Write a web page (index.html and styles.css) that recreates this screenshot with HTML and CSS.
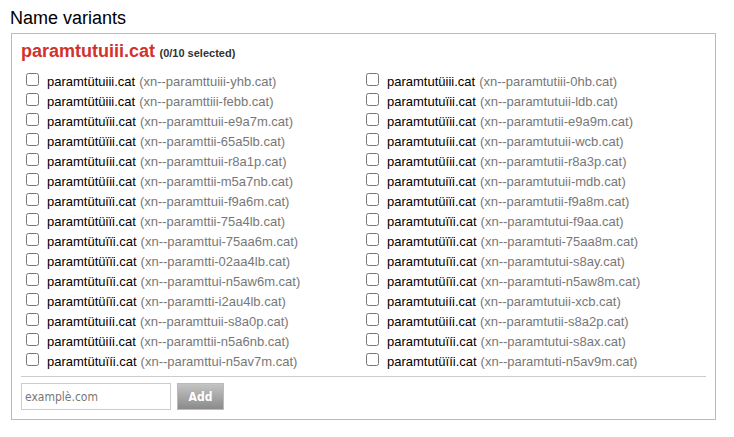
FILE: index.html
```html
<!DOCTYPE html>
<html>
<head>
<meta charset="utf-8">
<link rel="stylesheet" href="styles.css">
</head>
<body>
<h2 class="page-title">Name variants</h2>
<div class="panel">
  <div class="panel-head"><span class="domain">paramtutuiii.cat</span> <span class="count">(0/10 selected)</span></div>
  <div class="variants">
    <div class="col">
      <label class="row"><input type="checkbox"><span class="name">paramtütuiii.cat</span><span class="puny">(xn--paramttuiii-yhb.cat)</span></label>
      <label class="row"><input type="checkbox"><span class="name">paramtütüiii.cat</span><span class="puny">(xn--paramttiii-febb.cat)</span></label>
      <label class="row"><input type="checkbox"><span class="name">paramtütuïii.cat</span><span class="puny">(xn--paramttuii-e9a7m.cat)</span></label>
      <label class="row"><input type="checkbox"><span class="name">paramtütüïii.cat</span><span class="puny">(xn--paramttii-65a5lb.cat)</span></label>
      <label class="row"><input type="checkbox"><span class="name">paramtütuíii.cat</span><span class="puny">(xn--paramttuii-r8a1p.cat)</span></label>
      <label class="row"><input type="checkbox"><span class="name">paramtütüíii.cat</span><span class="puny">(xn--paramttii-m5a7nb.cat)</span></label>
      <label class="row"><input type="checkbox"><span class="name">paramtütuiïi.cat</span><span class="puny">(xn--paramttuii-f9a6m.cat)</span></label>
      <label class="row"><input type="checkbox"><span class="name">paramtütüiïi.cat</span><span class="puny">(xn--paramttii-75a4lb.cat)</span></label>
      <label class="row"><input type="checkbox"><span class="name">paramtütuïïi.cat</span><span class="puny">(xn--paramttui-75aa6m.cat)</span></label>
      <label class="row"><input type="checkbox"><span class="name">paramtütüïïi.cat</span><span class="puny">(xn--paramtti-02aa4lb.cat)</span></label>
      <label class="row"><input type="checkbox"><span class="name">paramtütuíïi.cat</span><span class="puny">(xn--paramttui-n5aw6m.cat)</span></label>
      <label class="row"><input type="checkbox"><span class="name">paramtütüíïi.cat</span><span class="puny">(xn--paramtti-i2au4lb.cat)</span></label>
      <label class="row"><input type="checkbox"><span class="name">paramtütuiíi.cat</span><span class="puny">(xn--paramttuii-s8a0p.cat)</span></label>
      <label class="row"><input type="checkbox"><span class="name">paramtütüiíi.cat</span><span class="puny">(xn--paramttii-n5a6nb.cat)</span></label>
      <label class="row"><input type="checkbox"><span class="name">paramtütuïíi.cat</span><span class="puny">(xn--paramttui-n5av7m.cat)</span></label>
    </div>
    <div class="col">
      <label class="row"><input type="checkbox"><span class="name">paramtutüiii.cat</span><span class="puny">(xn--paramtutiii-0hb.cat)</span></label>
      <label class="row"><input type="checkbox"><span class="name">paramtutuïii.cat</span><span class="puny">(xn--paramtutuii-ldb.cat)</span></label>
      <label class="row"><input type="checkbox"><span class="name">paramtutüïii.cat</span><span class="puny">(xn--paramtutii-e9a9m.cat)</span></label>
      <label class="row"><input type="checkbox"><span class="name">paramtutuíii.cat</span><span class="puny">(xn--paramtutuii-wcb.cat)</span></label>
      <label class="row"><input type="checkbox"><span class="name">paramtutüíii.cat</span><span class="puny">(xn--paramtutii-r8a3p.cat)</span></label>
      <label class="row"><input type="checkbox"><span class="name">paramtutuiïi.cat</span><span class="puny">(xn--paramtutuii-mdb.cat)</span></label>
      <label class="row"><input type="checkbox"><span class="name">paramtutüiïi.cat</span><span class="puny">(xn--paramtutii-f9a8m.cat)</span></label>
      <label class="row"><input type="checkbox"><span class="name">paramtutuïïi.cat</span><span class="puny">(xn--paramtutui-f9aa.cat)</span></label>
      <label class="row"><input type="checkbox"><span class="name">paramtutüïïi.cat</span><span class="puny">(xn--paramtuti-75aa8m.cat)</span></label>
      <label class="row"><input type="checkbox"><span class="name">paramtutuíïi.cat</span><span class="puny">(xn--paramtutui-s8ay.cat)</span></label>
      <label class="row"><input type="checkbox"><span class="name">paramtutüíïi.cat</span><span class="puny">(xn--paramtuti-n5aw8m.cat)</span></label>
      <label class="row"><input type="checkbox"><span class="name">paramtutuiíi.cat</span><span class="puny">(xn--paramtutuii-xcb.cat)</span></label>
      <label class="row"><input type="checkbox"><span class="name">paramtutüiíi.cat</span><span class="puny">(xn--paramtutii-s8a2p.cat)</span></label>
      <label class="row"><input type="checkbox"><span class="name">paramtutuïíi.cat</span><span class="puny">(xn--paramtutui-s8ax.cat)</span></label>
      <label class="row"><input type="checkbox"><span class="name">paramtutüïíi.cat</span><span class="puny">(xn--paramtuti-n5av9m.cat)</span></label>
    </div>
  </div>
  <div class="add-bar">
    <input class="add-input" type="text" placeholder="examplè.com">
    <button class="add-btn" type="button">Add</button>
  </div>
</div>
</body>
</html>
```
FILE: styles.css
```css
html, body {
  margin: 0;
  padding: 0;
  background: #fff;
}
body {
  font-family: "Liberation Sans", Arial, sans-serif;
  color: #000;
  padding: 8px 18px 0 11px;
}
.page-title {
  margin: 0 0 4px -1px;
  font-size: 18px;
  font-weight: normal;
  line-height: 21px;
}
.panel {
  border: 1px solid #bbb;
  padding: 6px 9px 9px 9px;
}
.panel-head {
  line-height: 22px;
  margin-bottom: 7px;
}
.domain {
  color: #d2322d;
  font-weight: bold;
  font-size: 18px;
}
.count {
  color: #333;
  font-weight: bold;
  font-size: 11px;
}
.variants {
  display: grid;
  grid-template-columns: 340px 340px;
}
.col {
  display: flex;
  flex-direction: column;
}
.row {
  display: flex;
  align-items: center;
  height: 20px;
  font-size: 13px;
  white-space: pre;
}
.row input {
  margin: 0 8px 0 5px;
  width: 13px;
  height: 13px;
  position: relative;
  top: -2px;
}
.name {
  color: #000;
}
.puny {
  color: #777;
  margin-left: 4px;
}
.add-bar {
  border-top: 1px solid #ccc;
  margin-top: 5px;
  padding-top: 6px;
  display: flex;
  gap: 6px;
}
.add-input {
  width: 150px;
  height: 27px;
  box-sizing: border-box;
  border: 1px solid #ccc;
  padding: 0 3px;
  font-family: "DejaVu Sans Condensed", "DejaVu Sans", sans-serif;
  font-size: 12px;
  margin: 0;
}
.add-input::placeholder {
  color: #777;
}
.add-btn {
  width: 47px;
  height: 27px;
  margin: 0;
  border: 1px solid #bbb;
  background: linear-gradient(#c4c4c4, #8a8a8a);
  color: #fff;
  font-family: "DejaVu Sans Condensed", "DejaVu Sans", sans-serif;
  font-weight: bold;
  font-size: 12px;
  padding: 0;
}
```
